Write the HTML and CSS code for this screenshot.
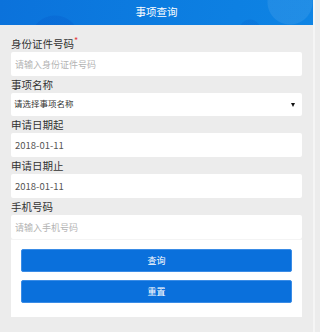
FILE: index.html
```html
<!DOCTYPE html>
<html lang="zh-CN">
<head>
<meta charset="utf-8">
<title>事项查询</title>
<link rel="stylesheet" href="styles.css">
</head>
<body>
<div class="page">
  <header class="topbar">
    <h1 class="title">事项查询</h1>
  </header>
  <form class="form">
    <div class="field">
      <label class="label">身份证件号码<span class="req">*</span></label>
      <input class="input" type="text" placeholder="请输入身份证件号码">
    </div>
    <div class="field">
      <label class="label">事项名称</label>
      <div class="select-wrap">
        <select class="select">
          <option>请选择事项名称</option>
        </select>
      </div>
    </div>
    <div class="field">
      <label class="label">申请日期起</label>
      <input class="input value" type="text" value="2018-01-11">
    </div>
    <div class="field">
      <label class="label">申请日期止</label>
      <input class="input value" type="text" value="2018-01-11">
    </div>
    <div class="field">
      <label class="label">手机号码</label>
      <input class="input" type="text" placeholder="请输入手机号码">
    </div>
    <div class="actions">
      <button type="button" class="btn">查询</button>
      <button type="button" class="btn">重置</button>
    </div>
  </form>
</div>
</body>
</html>
```
FILE: styles.css
```css
* { box-sizing: border-box; }
html, body {
  margin: 0;
  padding: 0;
  background: #ececec;
  font-family: "Noto Sans CJK SC", "Noto Sans", sans-serif;
}
body {
  width: 315px;
  height: 332px;
  overflow: hidden;
  border-right: 2px solid #f5f5f5;
}
.page {
  width: 313px;
}
.topbar {
  height: 25px;
  display: flex;
  align-items: center;
  justify-content: center;
  background:
    radial-gradient(circle at 55px 40px, rgba(0, 70, 190, 0.18) 0 24px, transparent 25px),
    radial-gradient(circle at 290px 2px, rgba(255, 255, 255, 0.08) 0 22px, transparent 23px),
    radial-gradient(circle at 250px 30px, rgba(0, 60, 180, 0.12) 0 10px, transparent 11px),
    linear-gradient(100deg, #0b72db 0%, #0c7ce0 50%, #0e84e4 100%);
}
.title {
  margin: 0;
  font-size: 10.5px;
  font-weight: normal;
  color: #fff;
  line-height: 1;
}
.form {
  padding: 10px 11px 0;
  display: flex;
  flex-direction: column;
}
.field {
  display: flex;
  flex-direction: column;
}
.label {
  height: 17px;
  line-height: 17px;
  font-size: 10.5px;
  color: #333;
}
.req {
  color: #e43b3b;
  font-size: 9px;
  vertical-align: top;
  line-height: 12px;
}
.input {
  height: 24px;
  width: 100%;
  border: 0;
  border-radius: 2px;
  background: #fff;
  padding: 0 4px;
  font-family: inherit;
  font-size: 9px;
  color: #555;
  outline: none;
}
.input::placeholder {
  color: #b3b3b3;
}
.input.value {
  font-size: 9.5px;
  color: #555;
}
.select-wrap {
  position: relative;
  height: 23px;
  background: #fff;
  border-radius: 2px;
}
.select-wrap::after {
  content: "";
  position: absolute;
  right: 7px;
  top: 10px;
  border-left: 2.5px solid transparent;
  border-right: 2.5px solid transparent;
  border-top: 4px solid #111;
}
.select {
  -webkit-appearance: none;
  appearance: none;
  display: block;
  width: 100%;
  height: 23px;
  border: 0;
  background: transparent;
  padding: 0 3px 3px;
  font-family: inherit;
  font-size: 8.5px;
  line-height: 20px;
  color: #333;
  outline: none;
}
.actions {
  background: #fff;
  padding: 9px 10px 14px;
  display: flex;
  flex-direction: column;
  gap: 8px;
  border-top: 1px solid #f4f4f4;
}
.btn {
  height: 23px;
  border: 1px solid #3a8ce6;
  border-radius: 2px;
  background: #0a70dc;
  color: #fff;
  font-family: inherit;
  font-size: 9px;
  padding: 0;
  cursor: pointer;
}
```
